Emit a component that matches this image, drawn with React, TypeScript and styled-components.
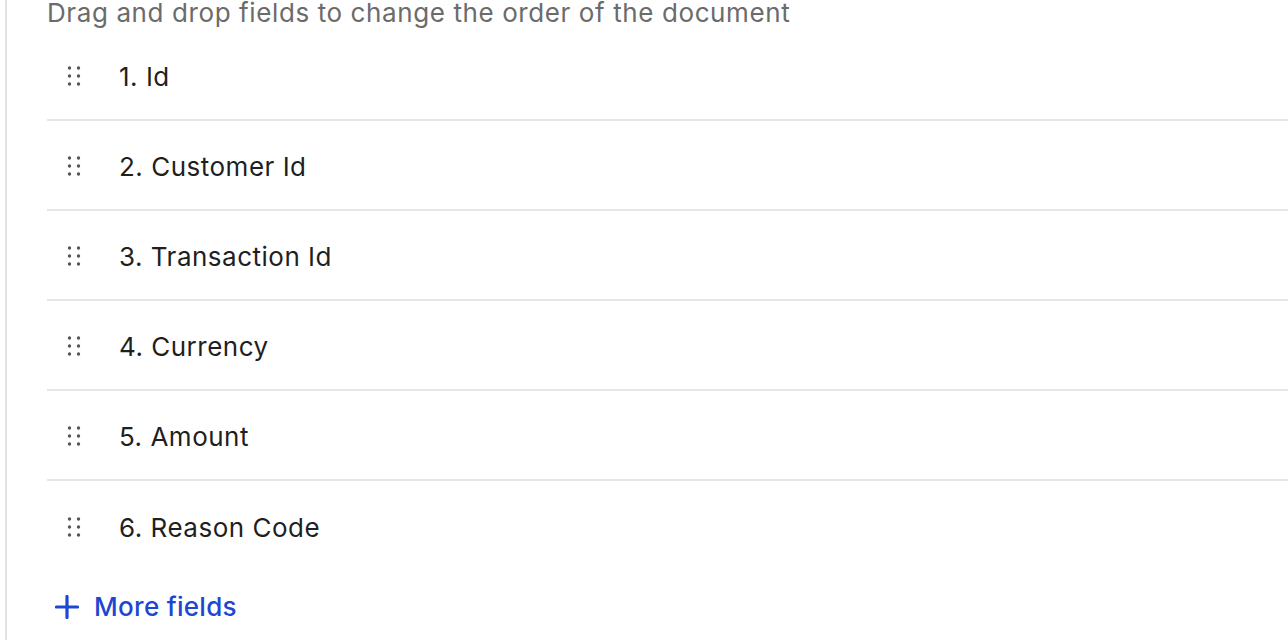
import React from "react";
import styled, { createGlobalStyle } from "styled-components";

const fields = ["Id", "Customer Id", "Transaction Id", "Currency", "Amount", "Reason Code"];

const GlobalStyle = createGlobalStyle`
  html, body {
    margin: 0;
    padding: 0;
    background: #ffffff;
    overflow: hidden;
  }
  body {
    font-family: Inter, "Noto Sans", sans-serif;
  }
`;

const DragHandle = () => (
  <svg width="16" height="20" viewBox="0 0 16 20" aria-hidden="true">
    {[2, 10, 18].map((y) =>
      [3.5, 12.5].map((x) => <circle key={`${x}-${y}`} cx={x} cy={y} r="1.7" fill="#555555" />)
    )}
  </svg>
);

const App = () => {
  return (
    <>
      <GlobalStyle />
      <Page>
        <Panel>
          <Hint>Drag and drop fields to change the order of the document</Hint>
          <FieldList>
            {fields.map((name, i) => (
              <FieldRow key={name}>
                <Handle>
                  <DragHandle />
                </Handle>
                <FieldName>
                  {i + 1}. {name}
                </FieldName>
              </FieldRow>
            ))}
          </FieldList>
          <MoreButton type="button">
            <svg width="24" height="24" viewBox="0 0 24 24" aria-hidden="true">
              <path d="M12 1.5v21M1.5 12h21" stroke="#1d47d0" strokeWidth="3.2" strokeLinecap="round" />
            </svg>
            More fields
          </MoreButton>
        </Panel>
      </Page>
    </>
  );
};

const Page = styled.div`
  padding-left: 5px;
  height: 640px;
  overflow: hidden;
`;

const Panel = styled.div`
  border-left: 2px solid #e2e2e2;
  padding-left: 40px;
  min-height: 660px;
  margin-top: -5px;
`;

const Hint = styled.p`
  margin: 0;
  font-size: 26px;
  line-height: 36px;
  letter-spacing: 0.6px;
  color: #6b6b6b;
  white-space: nowrap;
`;

const FieldList = styled.div`
  display: flex;
  flex-direction: column;
`;

const FieldRow = styled.div`
  display: flex;
  align-items: center;
  height: 90px;
  padding-top: 2px;
  box-sizing: border-box;
  border-bottom: 2px solid #e6e6e6;

  &:last-child {
    border-bottom: none;
  }
`;

const Handle = styled.span`
  display: flex;
  align-items: center;
  margin-left: 19px;
  width: 53px;
`;

const FieldName = styled.span`
  font-size: 26px;
  letter-spacing: 0.5px;
  color: #1f1f1f;
`;

const MoreButton = styled.button`
  display: flex;
  align-items: center;
  gap: 15px;
  margin-top: 20px;
  margin-left: 8px;
  padding: 0;
  border: none;
  background: none;
  font-family: Inter, "Noto Sans", sans-serif;
  font-size: 26px;
  font-weight: 500;
  letter-spacing: 0.3px;
  color: #1d47d0;
  cursor: pointer;
`;

export default App;
